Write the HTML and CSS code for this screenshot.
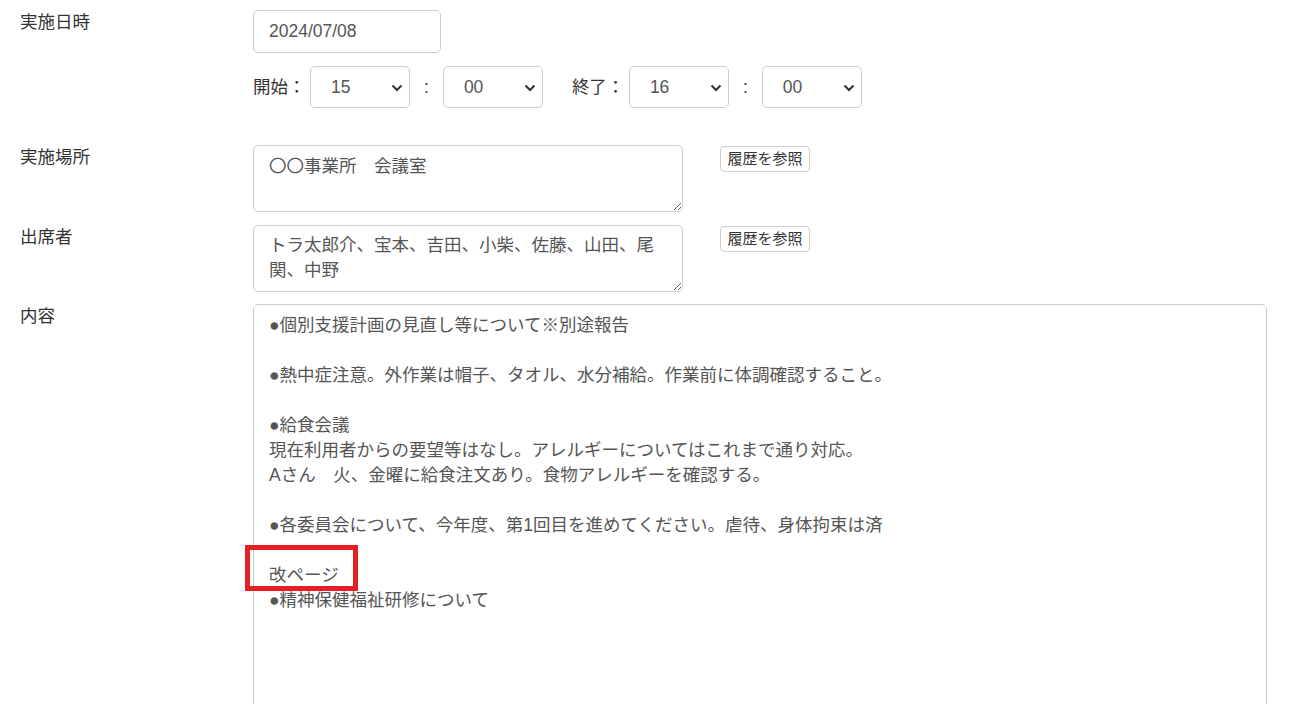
FILE: index.html
```html
<!DOCTYPE html>
<html lang="ja">
<head>
  <meta charset="UTF-8">
  <title>会議記録</title>
  <meta name="viewport" content="width=device-width, initial-scale=1">
  <link rel="stylesheet" href="styles.css">
</head>
<body>
  <div class="form-row form-row-datetime">
    <div class="row-label">実施日時</div>
    <div class="row-body">
      <input type="text" class="form-control date-input" value="2024/07/08">
      <div class="time-line">
        <span class="time-label">開始：</span>
        <span class="select-wrap">
          <select class="form-control time-select">
            <option selected>15</option>
          </select>
          <svg class="chevron" width="12" height="8" viewBox="0 0 12 8"><path d="M1.5 1.5 6 6l4.5-4.5" fill="none" stroke="#333" stroke-width="2"/></svg>
        </span>
        <span class="time-colon">:</span>
        <span class="select-wrap">
          <select class="form-control time-select">
            <option selected>00</option>
          </select>
          <svg class="chevron" width="12" height="8" viewBox="0 0 12 8"><path d="M1.5 1.5 6 6l4.5-4.5" fill="none" stroke="#333" stroke-width="2"/></svg>
        </span>
        <span class="time-label time-label-end">終了：</span>
        <span class="select-wrap">
          <select class="form-control time-select">
            <option selected>16</option>
          </select>
          <svg class="chevron" width="12" height="8" viewBox="0 0 12 8"><path d="M1.5 1.5 6 6l4.5-4.5" fill="none" stroke="#333" stroke-width="2"/></svg>
        </span>
        <span class="time-colon">:</span>
        <span class="select-wrap">
          <select class="form-control time-select">
            <option selected>00</option>
          </select>
          <svg class="chevron" width="12" height="8" viewBox="0 0 12 8"><path d="M1.5 1.5 6 6l4.5-4.5" fill="none" stroke="#333" stroke-width="2"/></svg>
        </span>
      </div>
    </div>
  </div>

  <div class="form-row">
    <div class="row-label">実施場所</div>
    <div class="row-body row-body-inline">
      <textarea class="form-control short-text" rows="2">〇〇事業所　会議室</textarea>
      <button type="button" class="btn-history">履歴を参照</button>
    </div>
  </div>

  <div class="form-row">
    <div class="row-label">出席者</div>
    <div class="row-body row-body-inline">
      <textarea class="form-control short-text" rows="2">トラ太郎介、宝本、吉田、小柴、佐藤、山田、尾関、中野</textarea>
      <button type="button" class="btn-history">履歴を参照</button>
    </div>
  </div>

  <div class="form-row">
    <div class="row-label">内容</div>
    <div class="row-body content-wrap">
      <textarea class="form-control content-text">●個別支援計画の見直し等について※別途報告

●熱中症注意。外作業は帽子、タオル、水分補給。作業前に体調確認すること。

●給食会議
現在利用者からの要望等はなし。アレルギーについてはこれまで通り対応。
Aさん　火、金曜に給食注文あり。食物アレルギーを確認する。

●各委員会について、今年度、第1回目を進めてください。虐待、身体拘束は済

改ページ
●精神保健福祉研修について</textarea>
      <div class="page-break-mark"></div>
    </div>
  </div>
</body>
</html>
```

FILE: styles.css
```css
html {
  overflow: hidden;
}
body {
  margin: 0;
  padding: 10px 37px 0 20px;
  font-family: "Liberation Sans", "Noto Sans CJK JP", sans-serif;
  font-size: 17.5px;
  line-height: 25px;
  color: #333;
  background: #fff;
}
.form-row {
  display: flex;
  margin-bottom: 12.5px;
}
.form-row-datetime {
  margin-bottom: 37px;
}
.row-label {
  width: 233px;
  flex-shrink: 0;
}
.row-body {
  flex: 1;
  min-width: 0;
}
.row-body-inline {
  display: flex;
  align-items: flex-start;
}
.form-control {
  font-family: inherit;
  font-size: 17.5px;
  line-height: 25px;
  color: #555;
  background: #fff;
  border: 1px solid #ccc;
  border-radius: 5px;
  box-sizing: border-box;
  padding: 7.5px 15px;
  margin: 0;
  outline: none;
}
.date-input {
  display: block;
  width: 188px;
  height: 43px;
  margin-bottom: 13px;
}
.time-line {
  display: flex;
  align-items: center;
  height: 42px;
}
.time-label {
  margin-right: 4.5px;
}
.time-label-end {
  margin-left: 29px;
}
.time-colon {
  margin: 0 14px;
  color: #333;
}
.select-wrap {
  position: relative;
  display: inline-block;
}
.time-select {
  -webkit-appearance: none;
  appearance: none;
  width: 100px;
  height: 42px;
  padding: 0 0 0 20px;
  display: block;
}
.chevron {
  position: absolute;
  right: 7px;
  top: 18px;
  pointer-events: none;
}
.short-text {
  width: 430px;
  height: 67px;
  resize: vertical;
  flex-shrink: 0;
}
.btn-history {
  margin: 1px 0 0 37px;
  height: 26px;
  padding: 0 6.5px;
  font-family: inherit;
  font-size: 15px;
  line-height: 24px;
  color: #333;
  background: #fff;
  border: 1px solid #ccc;
  border-radius: 4px;
  cursor: pointer;
}
.content-wrap {
  position: relative;
}
.content-text {
  display: block;
  width: 100%;
  height: 620px;
  resize: vertical;
}
.page-break-mark {
  position: absolute;
  left: -8px;
  top: 241px;
  width: 113px;
  height: 46px;
  box-sizing: border-box;
  border: 5px solid #e61e25;
  pointer-events: none;
}
```
